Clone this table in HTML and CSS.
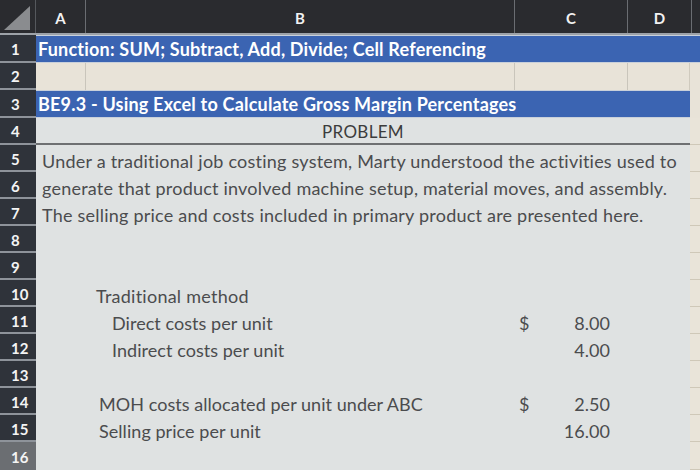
FILE: index.html
```html
<!DOCTYPE html>
<html>
<head>
<meta charset="utf-8">
<link rel="stylesheet" href="styles.css">
</head>
<body>
<div class="sheet">
  <div class="hdr">
    <div class="corner"><span class="tri"></span></div>
    <div class="col-h a">A</div>
    <div class="col-h b">B</div>
    <div class="col-h c">C</div>
    <div class="col-h d">D</div>
    <div class="col-h e"></div>
  </div>

  <div class="row r-top">
    <div class="num">1</div>
    <div class="body blue wide"><span class="title">Function: SUM; Subtract, Add, Divide; Cell Referencing</span></div>
  </div>
  <div class="row r-top">
    <div class="num">2</div>
    <div class="body cream cells">
      <div class="cell ca"></div><div class="cell cb"></div><div class="cell cc"></div><div class="cell cd"></div>
    </div>
    <div class="extra cream"></div>
  </div>
  <div class="row r-top">
    <div class="num">3</div>
    <div class="body blue"><span class="title">BE9.3 - Using Excel to Calculate Gross Margin Percentages</span></div>
    <div class="extra cream"></div>
  </div>
  <div class="row r-top">
    <div class="num">4</div>
    <div class="body gray underline center"><span class="problem">PROBLEM</span></div>
    <div class="extra lined"></div>
  </div>
  <div class="row">
    <div class="num">5</div>
    <div class="body gray"><span class="text para">Under a traditional job costing system, Marty understood the activities used to</span></div>
    <div class="extra lined"></div>
  </div>
  <div class="row">
    <div class="num">6</div>
    <div class="body gray"><span class="text para">generate that product involved machine setup, material moves, and assembly.</span></div>
    <div class="extra lined"></div>
  </div>
  <div class="row">
    <div class="num">7</div>
    <div class="body gray"><span class="text para">The selling price and costs included in primary product are presented here.</span></div>
    <div class="extra lined"></div>
  </div>
  <div class="row">
    <div class="num">8</div>
    <div class="body gray"></div>
    <div class="extra lined"></div>
  </div>
  <div class="row">
    <div class="num">9</div>
    <div class="body gray"></div>
    <div class="extra lined"></div>
  </div>
  <div class="row">
    <div class="num">10</div>
    <div class="body gray"><span class="text ind1">Traditional method</span></div>
    <div class="extra lined"></div>
  </div>
  <div class="row">
    <div class="num">11</div>
    <div class="body gray money">
      <span class="text ind2 label">Direct costs per unit</span><span class="text dollar">$</span><span class="text val">8.00</span>
    </div>
    <div class="extra lined"></div>
  </div>
  <div class="row">
    <div class="num">12</div>
    <div class="body gray money">
      <span class="text ind2 label">Indirect costs per unit</span><span class="text dollar"></span><span class="text val">4.00</span>
    </div>
    <div class="extra lined"></div>
  </div>
  <div class="row">
    <div class="num">13</div>
    <div class="body gray"></div>
    <div class="extra lined"></div>
  </div>
  <div class="row">
    <div class="num">14</div>
    <div class="body gray money">
      <span class="text ind3 label">MOH costs allocated per unit under ABC</span><span class="text dollar">$</span><span class="text val">2.50</span>
    </div>
    <div class="extra lined"></div>
  </div>
  <div class="row">
    <div class="num">15</div>
    <div class="body gray money">
      <span class="text ind3 label">Selling price per unit</span><span class="text dollar"></span><span class="text val">16.00</span>
    </div>
    <div class="extra lined"></div>
  </div>
  <div class="row last">
    <div class="num sel">16</div>
    <div class="body gray"></div>
    <div class="extra lined"></div>
  </div>
</div>
</body>
</html>
```

FILE: styles.css
```css
* { box-sizing: border-box; }
html, body { margin: 0; padding: 0; }
body {
  width: 700px;
  height: 470px;
  overflow: hidden;
  background: #2f3238;
  font-family: Lato, "Open Sans", sans-serif;
}
.sheet {
  display: flex;
  flex-direction: column;
  width: 700px;
  height: 470px;
}
.hdr {
  display: grid;
  grid-template-columns: 36px 50px 429px 113px 64px 1fr;
  height: 35px;
  background: #2a2b2f;
  border-bottom: 2px solid #9da2a8;
}
.corner {
  position: relative;
  border-right: 1px solid #55585d;
}
.tri {
  position: absolute;
  left: 4px;
  top: 6px;
  width: 0;
  height: 0;
  border-left: 26px solid transparent;
  border-bottom: 24px solid #8a8c8f;
}
.col-h {
  display: flex;
  align-items: center;
  justify-content: center;
  color: #f2f2f2;
  font-weight: 700;
  font-size: 15px;
  border-right: 1px solid #6a6d72;
  padding-top: 2px;
}
.col-h.e { border-right: none; }

.row {
  display: grid;
  grid-template-columns: 36px 654px 1fr;
  height: 27px;
  flex: none;
}
.row.r-top { height: 27.5px; }
.row.last { flex: 1; }
.num {
  background: #2f333a;
  color: #f4f4f4;
  font-weight: 700;
  font-size: 15px;
  display: flex;
  align-items: center;
  padding-left: 11px;
  padding-top: 2px;
  border-bottom: 2px solid #8e939a;
}
.num.sel { background: #6b6e72; border-bottom: none; }
.body {
  display: flex;
  align-items: center;
  min-width: 0;
  white-space: nowrap;
}
.body.wide { grid-column: 2 / 4; }
.blue {
  background: #3b64b2;
  border-top: 1px solid #c9d0da;
  border-bottom: 1px solid #c9d0da;
}
.cream { background: #e8e3d8; }
.gray { background: #dfe2e2; }
.title {
  color: #ffffff;
  font-weight: 700;
  font-size: 18px;
  letter-spacing: 0.2px;
  padding-left: 2px;
  padding-top: 1px;
}
.cells { align-items: stretch; }
.cell { border-right: 1px solid #c9c5bb; }
.ca { width: 50px; }
.cb { width: 429px; }
.cc { width: 113px; }
.cd { width: 62px; border-right: 1px solid #cfcabe; }
.extra.lined {
  background: #e9e4d9;
  border-bottom: 1px solid #cfc8b8;
}
.underline { border-bottom: 2px solid #6e7072; }
.center { justify-content: center; }
.problem {
  color: #3c3c3c;
  font-size: 17px;
  letter-spacing: 0.3px;
  padding-top: 3px;
}
.text {
  color: #4b4c4e;
  font-size: 18px;
  letter-spacing: 0.05px;
  padding-top: 5px;
}
.para { padding-left: 6px; letter-spacing: 0.22px; }
.ind1 { padding-left: 60px; letter-spacing: 0.25px; }
.ind2 { padding-left: 76px; }
.ind3 { padding-left: 63px; }
.money { display: grid; grid-template-columns: 479px 30px 65px; }
.dollar { padding-left: 4px; }
.val { text-align: right; }
```
